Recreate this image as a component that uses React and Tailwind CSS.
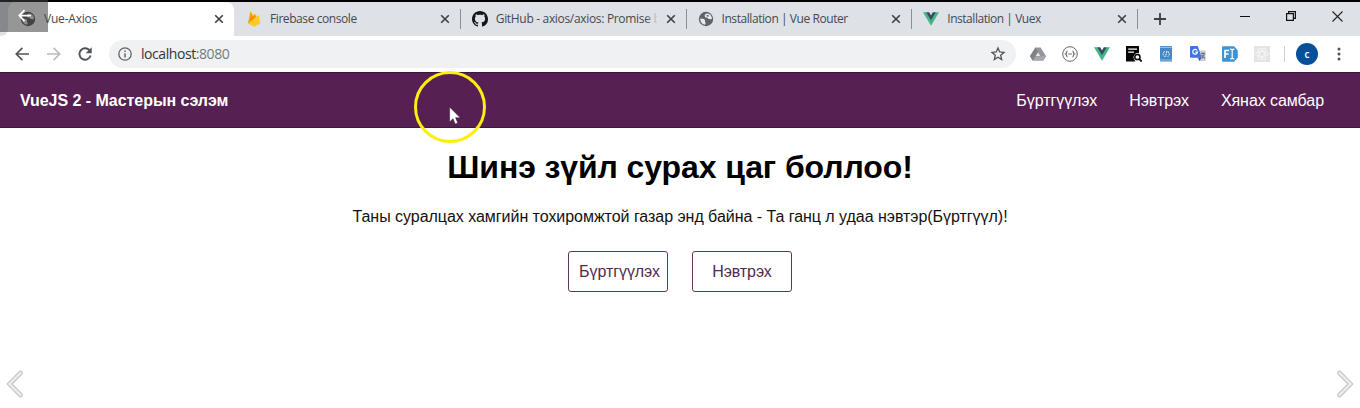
import React from "react";

function Globe({ dark }) {
  return (
    <svg viewBox="0 0 16 16" className="h-4 w-4 shrink-0">
      <circle cx="8" cy="8" r="7.2" fill={dark ? "#46484b" : "#5f6368"} />
      <path d="M2.2 7.2 C3.5 8 5.6 7.4 6.6 8.6 C7.6 9.6 6.4 10.6 7.4 11.4 C8 12 7.4 13.6 6.4 13.7 C3.6 12.8 2 10.4 2.2 7.2Z" fill="#e8eaed" />
      <path d="M7 3.4 C8.4 2.2 10.4 2.3 11.9 3.4 C13.2 4.4 13.9 6 13.9 7.8 C13 8.8 12.2 7.6 11.2 8 C10 8.2 9.8 6.8 8.6 6.6 C7.4 6.4 6 5.4 7 3.4Z" fill="#e8eaed" />
      <path d="M8.3 4.2 L10.4 3.8 L10.8 5.4 L9.2 5.7Z" fill="#5f6368" />
    </svg>
  );
}

function Flame() {
  return (
    <svg viewBox="0 0 16 16" className="h-4 w-4 shrink-0">
      <path d="M2 12.6 L4.2 1.2 C4.3 .8 4.8 .7 5 1.1 L7.2 5 L8.3 3.1 C8.5 2.8 8.9 2.8 9 3.1 L13 11Z" fill="#ffa000" />
      <path d="M2 12.6 L8.3 6.6 L7.2 5Z" fill="#f57c00" />
      <path d="M2 12.6 L12.2 4.3 C12.5 4 12.9 4.2 13 4.6 L14.2 12.6 L8.8 15.5 C8.3 15.8 7.8 15.8 7.3 15.5Z" fill="#ffca28" />
    </svg>
  );
}

function Octocat() {
  return (
    <svg viewBox="0 0 16 16" className="h-4 w-4 shrink-0" fill="#15171a">
      <path d="M8 0C3.58 0 0 3.58 0 8c0 3.54 2.29 6.53 5.47 7.59.4.07.55-.17.55-.38 0-.19-.01-.82-.01-1.49-2.01.37-2.53-.49-2.69-.94-.09-.23-.48-.94-.82-1.13-.28-.15-.68-.52-.01-.53.63-.01 1.08.58 1.23.82.72 1.21 1.87.87 2.33.66.07-.52.28-.87.51-1.07-1.78-.2-3.64-.89-3.64-3.95 0-.87.31-1.59.82-2.15-.08-.2-.36-1.02.08-2.12 0 0 .67-.21 2.2.82.64-.18 1.32-.27 2-.27s1.36.09 2 .27c1.53-1.04 2.2-.82 2.2-.82.44 1.1.16 1.92.08 2.12.51.56.82 1.27.82 2.15 0 3.07-1.87 3.75-3.65 3.95.29.25.54.73.54 1.48 0 1.07-.01 1.93-.01 2.2 0 .21.15.46.55.38A8.01 8.01 0 0 0 16 8c0-4.42-3.58-8-8-8Z" />
    </svg>
  );
}

function VueMark() {
  return (
    <svg viewBox="0 0 16 16" className="h-4 w-4 shrink-0">
      <path d="M0 1.3 H3.4 L8 9.2 L12.6 1.3 H16 L8 14.8Z" fill="#41b883" />
      <path d="M3.2 1.3 H6.2 L8 4.4 L9.8 1.3 H12.8 L8 9.5Z" fill="#34495e" />
    </svg>
  );
}

function Cross() {
  return (
    <svg viewBox="0 0 10 10" className="h-[10px] w-[10px] shrink-0">
      <path d="M1.2 1.2 L8.8 8.8 M8.8 1.2 L1.2 8.8" stroke="#3c4043" strokeWidth="1.6" />
    </svg>
  );
}

function Tab({ icon, title, track, active, divider, fade }) {
  return (
    <div className={active ? "relative flex h-full w-[226px] items-center rounded-t-lg bg-white pl-3 pr-[10px]" : "relative flex h-full w-[225.75px] items-center pl-3 pr-[10px]"}>
      {active && (
        <svg viewBox="0 0 8 8" className="absolute -left-2 bottom-0 h-2 w-2" fill="#fff">
          <path d="M8 0 V8 H0 Q8 8 8 0Z" />
        </svg>
      )}
      {icon}
      <div className="ml-2 w-[161px] overflow-hidden whitespace-nowrap text-[12px] leading-4 text-[#45494d]">
        <span className={track}>{title}</span>
      </div>
      {fade && <div className="absolute left-[186px] top-2 h-5 w-3 bg-gradient-to-r from-transparent to-[#dee1e6]" />}
      <div className="ml-auto flex"><Cross /></div>
      {divider && <div className="absolute right-[-1px] top-[7px] h-5 w-px bg-[#8b8e93]" />}
    </div>
  );
}

function TabStrip() {
  return (
    <div className="flex h-[34px] bg-[#dee1e6] pl-2">
      <Tab active icon={<Globe dark />} title="Vue-Axios" track="tracking-[-0.2px]" />
      <Tab divider icon={<Flame />} title="Firebase console" track="tracking-[-0.42px]" />
      <Tab divider fade icon={<Octocat />} title="GitHub - axios/axios: Promise based" track="tracking-[-0.32px]" />
      <Tab divider icon={<Globe />} title="Installation | Vue Router" track="tracking-[-0.43px]" />
      <Tab divider icon={<VueMark />} title="Installation | Vuex" track="tracking-[-0.46px]" />
      <svg viewBox="0 0 12 12" className="ml-[17px] mt-[11px] h-3 w-3">
        <path d="M6 0 V12 M0 6 H12" stroke="#3c4043" strokeWidth="1.8" />
      </svg>
      <div className="ml-auto flex h-7">
        <div className="flex w-[46px] items-center justify-center">
          <div className="h-px w-[10px] bg-[#111]" />
        </div>
        <div className="flex w-[46px] items-center justify-center">
          <svg viewBox="0 0 10 10" className="h-[10px] w-[10px]" fill="none" stroke="#111" strokeWidth="1.2">
            <path d="M.6 2.6 H7.4 V9.4 H.6Z M2.6 2.4 V.6 H9.4 V7.4 H7.6" />
          </svg>
        </div>
        <div className="flex w-[46px] items-center justify-center">
          <svg viewBox="0 0 11 11" className="h-[11px] w-[11px]">
            <path d="M.5 .5 L10.5 10.5 M10.5 .5 L.5 10.5" stroke="#222" strokeWidth="1.1" />
          </svg>
        </div>
      </div>
    </div>
  );
}

function Extensions() {
  return (
    <div className="ml-[14px] flex items-center gap-4">
      <svg viewBox="0 0 16 16" className="h-4 w-4">
        <path d="M5.4 1.5 H10.6 L16 10.2 L13.3 14.5 H2.7 L0 10.2Z" fill="#949699" />
        <path d="M5.4 1.5 L8 5.8 L2.7 14.5 L0 10.2Z" fill="#808285" />
        <path d="M5.6 10.2 H16 L13.3 14.5 H2.9Z" fill="#a6a8ab" />
        <path d="M8 6.3 L10.2 10 H5.8Z" fill="#e9e9e9" />
      </svg>
      <svg viewBox="0 0 16 16" className="h-4 w-4" fill="none" stroke="#66696d">
        <circle cx="8" cy="8" r="7.3" strokeWidth="1" />
        <path d="M5.6 5 C4.2 5 5 7.5 3.6 8 C5 8.5 4.2 11 5.6 11 M10.4 5 C11.8 5 11 7.5 12.4 8 C11 8.5 11.8 11 10.4 11 M6.2 8 H9.8" strokeWidth="1.2" />
      </svg>
      <VueMark />
      <svg viewBox="0 0 16 16" className="h-4 w-4">
        <path d="M0 0 H13 V7.2 A4.2 4.2 0 0 0 8 13 L9.4 15.5 H0Z" fill="#080808" />
        <path d="M2.2 3.2 H11 M2.2 6.2 H8" stroke="#fff" strokeWidth="1.2" />
        <circle cx="11.4" cy="11" r="2.6" fill="none" stroke="#080808" strokeWidth="1.5" />
        <path d="M13.2 12.8 L15.7 15.6" stroke="#080808" strokeWidth="1.8" />
      </svg>
      <svg viewBox="0 0 16 16" className="h-4 w-4">
        <path d="M2 0 H14 V15.5 H2Z" fill="#4588c9" />
        <path d="M2 1.3 H14 M2 14 H14" stroke="#93bce3" strokeWidth="1.2" />
        <path d="M6.5 5.3 L4.8 8 L6.5 10.8 M9.8 5.3 L11.6 8 L9.8 10.8 M8.8 5 L7.6 11" fill="none" stroke="#e7f1fb" strokeWidth="1" strokeDasharray="2 .7" />
      </svg>
      <svg viewBox="0 0 16 16" className="h-4 w-4">
        <path d="M7 4.5 H15 Q15.6 4.5 15.6 5.1 V15 H9.5Z" fill="#c9cbd0" />
        <path d="M.8 0 H7.8 L11.7 11.8 H.8 Q0 11.8 0 11 V.8 Q0 0 .8 0Z" fill="#3f75df" />
        <path d="M8 11.8 H11.7 L9.3 15Z" fill="#2d56b5" />
        <path d="M7.2 4.5 A2.4 2.4 0 1 0 7.5 6.2 H5.4" fill="none" stroke="#fff" strokeWidth="1.2" />
        <path d="M11 7.5 H15 M13 6.4 V7.5 M14.4 7.5 Q13.8 10.5 11.8 12 M11.5 9 L14.8 12.4" fill="none" stroke="#666b76" strokeWidth="1.1" />
      </svg>
      <svg viewBox="0 0 16 16" className="h-4 w-4">
        <path d="M1 .3 H12.2 L15.8 4.6 V11.4 L12.2 15.7 H1 Q0 15.7 0 14.7 V1.3 Q0 .3 1 .3Z" fill="#3d93d6" />
        <path d="M3 12 V4.5 H7.2 M3 8 H6.6" fill="none" stroke="#fff" strokeWidth="1.7" />
        <path d="M8 3.2 Q9.8 3.2 10.2 4 Q10.6 3.2 12.4 3.2 M10.2 4 V12 M8 13 Q9.8 13 10.2 12 Q10.6 13 12.4 13" fill="none" stroke="#fff" strokeWidth="1.2" />
      </svg>
      <svg viewBox="0 0 16 16" className="h-4 w-4">
        <rect width="16" height="16" fill="#e4e4e4" />
        <g fill="none" stroke="#f6f6f6">
          <ellipse cx="8" cy="8" rx="6.3" ry="2.5" />
          <ellipse cx="8" cy="8" rx="6.3" ry="2.5" transform="rotate(60 8 8)" />
          <ellipse cx="8" cy="8" rx="6.3" ry="2.5" transform="rotate(120 8 8)" />
        </g>
      </svg>
    </div>
  );
}

function Toolbar() {
  return (
    <div className="flex h-9 items-center bg-white pl-[15px]">
      <svg viewBox="0 0 14 14" className="h-[14px] w-[14px]" fill="none" stroke="#505357" strokeWidth="1.7">
        <path d="M14 7 H1.4 M7.4 .9 L1.3 7 L7.4 13.1" />
      </svg>
      <svg viewBox="0 0 14 14" className="ml-[18px] h-[14px] w-[14px]" fill="none" stroke="#babcbe" strokeWidth="1.6">
        <path d="M0 7 H12.6 M6.6 .9 L12.7 7 L6.6 13.1" />
      </svg>
      <svg viewBox="0 0 14 14" className="ml-[17px] h-[14px] w-[14px]">
        <path d="M12 4 A5.7 5.7 0 1 0 12.6 8.6" fill="none" stroke="#505357" strokeWidth="1.9" />
        <path d="M13.7 .3 V6.3 H7.7Z" fill="#505357" />
      </svg>
      <div className="ml-[17px] flex h-7 w-[907px] items-center rounded-full bg-[#f0f1f3] pl-[9px] pr-[10px]">
        <svg viewBox="0 0 14 14" className="h-[14px] w-[14px]" fill="none" stroke="#5f6368">
          <circle cx="7" cy="7" r="6.2" strokeWidth="1.3" />
          <path d="M7 6.2 V10.4 M7 3.6 V5" strokeWidth="1.4" />
        </svg>
        <div className="ml-[9px] whitespace-nowrap text-[14px] leading-5 tracking-[-0.43px] text-[#33363a]">
          localhost<span className="text-[#76797d]">:8080</span>
        </div>
        <svg viewBox="0 0 16 16" className="ml-auto h-4 w-4" fill="none" stroke="#505357" strokeWidth="1.3">
          <path d="M8 2 L9.7 6 L14 6.4 L10.7 9.2 L11.7 13.5 L8 11.2 L4.3 13.5 L5.3 9.2 L2 6.4 L6.3 6Z" />
        </svg>
      </div>
      <Extensions />
      <div className="ml-[14px] h-4 w-px bg-[#cfd1d4]" />
      <div className="ml-[11px] flex h-[22px] w-[22px] items-center justify-center rounded-full bg-[#04509b] text-[10px] font-semibold leading-none text-white">c</div>
      <svg viewBox="0 0 4 14" className="ml-[19px] h-[14px] w-1" fill="#505357">
        <circle cx="2" cy="2" r="1.5" />
        <circle cx="2" cy="7" r="1.5" />
        <circle cx="2" cy="12" r="1.5" />
      </svg>
    </div>
  );
}

function Chevron({ flip }) {
  return (
    <svg viewBox="0 0 18 28" className={flip ? "h-7 w-[18px] -scale-x-100" : "h-7 w-[18px]"} fill="none" strokeLinecap="round" strokeLinejoin="miter">
      <path d="M14.5 3 L3.5 14 L14.5 25" stroke="#c6c6c6" strokeWidth="4.6" />
      <path d="M14.5 3 L3.5 14 L14.5 25" stroke="#ededed" strokeWidth="2.4" />
    </svg>
  );
}

export default function App() {
  return (
    <div className="relative flex h-[408px] w-[1360px] flex-col overflow-hidden bg-white font-['Open_Sans',sans-serif]">
      <div className="h-0.5 shrink-0 bg-black" />
      <TabStrip />
      <Toolbar />
      <div className="flex h-14 shrink-0 items-center border-y border-t-[#3c1539] border-b-[#431640] bg-[#572052] pl-5 pr-9 pt-px font-['Liberation_Sans',sans-serif] text-base text-white">
        <div className="whitespace-nowrap font-bold tracking-[-0.05px]">VueJS 2 - Мастерын сэлэм</div>
        <nav className="ml-auto flex gap-8 whitespace-nowrap tracking-[-0.06px]">
          <a>Бүртгүүлэх</a>
          <a>Нэвтрэх</a>
          <a>Хянах самбар</a>
        </nav>
      </div>
      <main className="flex flex-col items-center whitespace-nowrap pt-[21px] font-['Liberation_Sans',sans-serif] text-base text-black">
        <h1 className="text-[32px] font-bold leading-[37px] tracking-[-0.1px]">Шинэ зүйл сурах цаг боллоо!</h1>
        <p className="mt-[22px] leading-[18px] tracking-[-0.035px] text-[#111]">Таны суралцах хамгийн тохиромжтой газар энд байна - Та ганц л удаа нэвтэр(Бүртгүүл)!</p>
        <div className="mt-[25px] flex gap-6 text-[#55294f]">
          <button className="h-[41px] w-[100px] rounded-[3px] border border-[#633659] pl-[3px] tracking-[-0.06px]">Бүртгүүлэх</button>
          <button className="h-[41px] w-[100px] rounded-[3px] border border-[#633659] tracking-[-0.06px]">Нэвтрэх</button>
        </div>
      </main>
      <div className="mt-auto flex justify-between px-[6px] pb-[10px]">
        <Chevron />
        <Chevron flip />
      </div>
      <div className="absolute left-0 top-0 h-8 w-12 bg-[#404040]/55">
        <svg viewBox="0 0 14 14" className="ml-[18px] mt-[9px] h-[14px] w-[14px]" fill="none" stroke="#fff" strokeWidth="1.8">
          <path d="M13 6.6 H1.5 M6.5 1.1 L1.3 6.6 L6.5 12.1" />
        </svg>
      </div>
      <div className="absolute left-[414px] top-[71px] h-[72px] w-[72px] rounded-full border-[3px] border-[#fbee12]" />
      <svg viewBox="0 0 12 19" className="absolute left-[449px] top-[106px] h-[19px] w-3">
        <path d="M.6 1 V16 L4 12.8 L6.2 18 L8.8 16.9 L6.6 11.8 H11.3Z" fill="#fff" stroke="#26102a" strokeWidth=".5" />
      </svg>
    </div>
  );
}
